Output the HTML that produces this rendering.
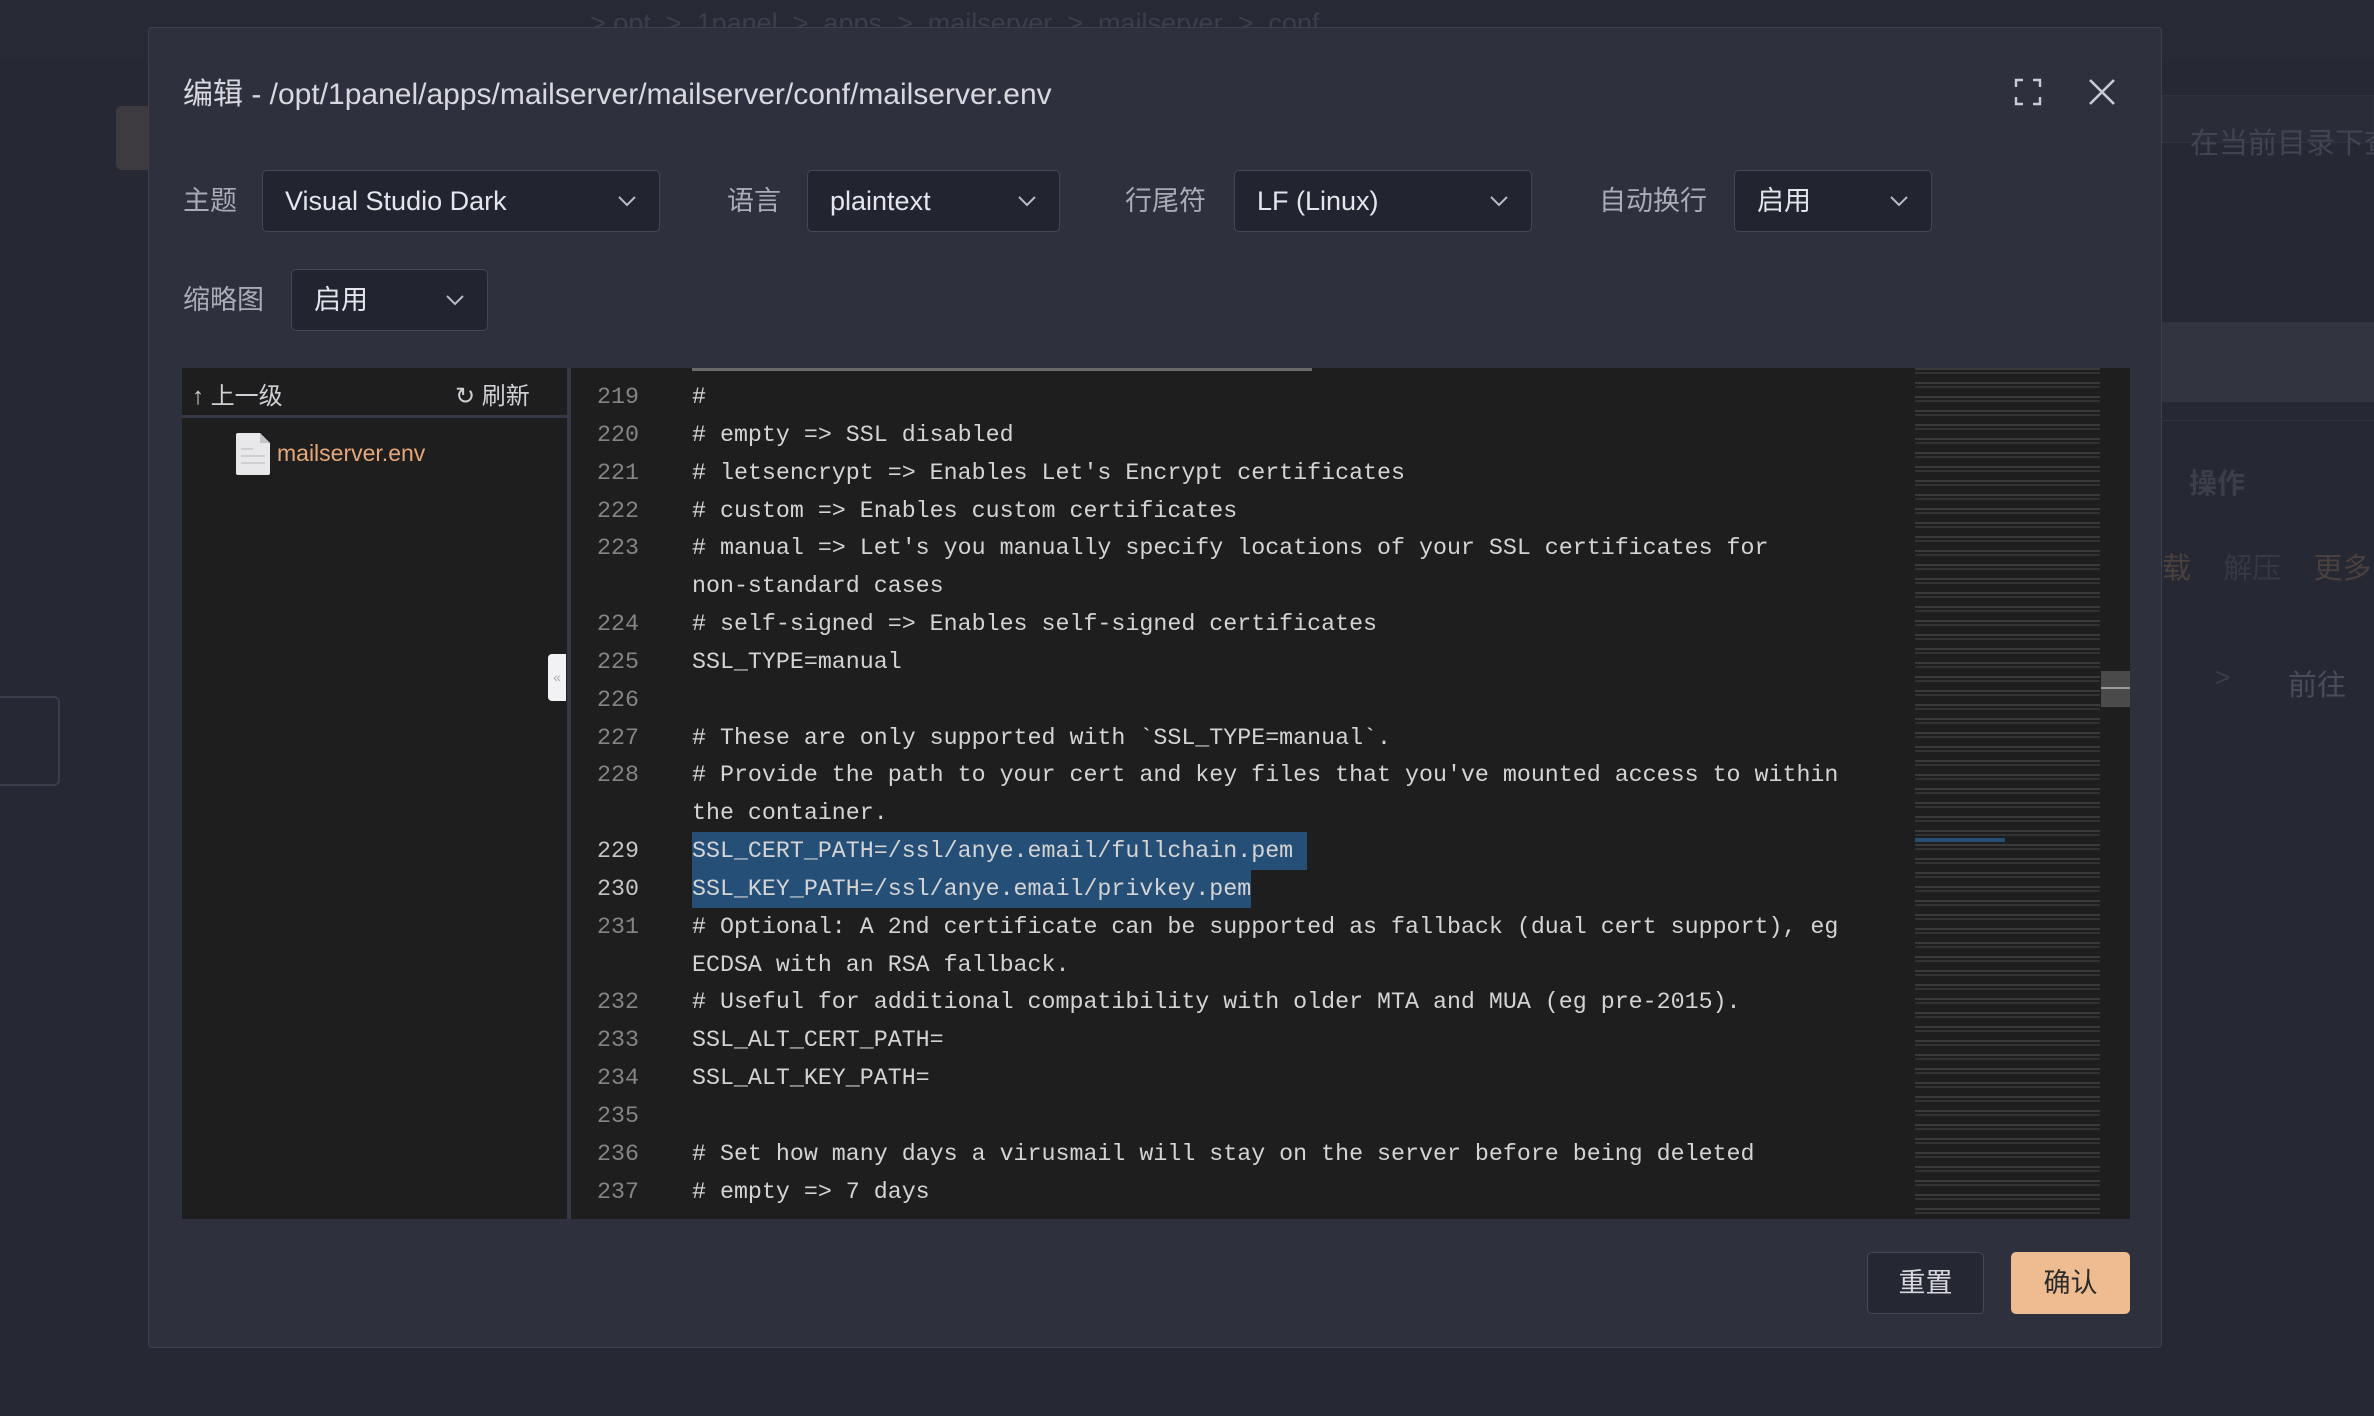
<!DOCTYPE html>
<html><head><meta charset="utf-8">
<style>
*{margin:0;padding:0;box-sizing:border-box}
body{width:2374px;height:1416px;background:#262833;position:relative;overflow:hidden;font-family:"Liberation Sans","Noto Sans CJK SC",sans-serif}
.abs{position:absolute;white-space:nowrap}
.dlg{left:148px;top:27px;width:2014px;height:1321px;background:#2e303d;border:1px solid #3d404d;border-radius:4px}
.lbl{position:absolute;color:#a9acb5;font-size:27px;line-height:30px}
.sel{position:absolute;background:#22242f;border:1px solid #444754;border-radius:5px;height:62px;color:#e4e6ec;font-size:27px;line-height:60px;padding-left:22px}
.sel svg{position:absolute;right:22px;top:23px}
.code{position:absolute;left:571px;top:368px;width:1559px;height:851px;background:#1e1e1e;overflow:hidden}
.row{position:absolute;left:0;height:38px;font-family:"Liberation Mono",monospace;font-size:23.3px;line-height:38px;white-space:pre;color:#d4d4d4}
.ln{position:absolute;width:68px;text-align:right;left:0;color:#858585}
.tx{position:absolute;left:121px}
.hl{background:#264f78}
</style></head><body>
<div class="abs" style="left:0;top:0;width:2374px;height:60px;background:#272934"></div>
<div class="abs" style="left:590px;top:8px;color:#3c3f4b;font-size:27px">&gt; opt &nbsp;&gt; &nbsp;1panel &nbsp;&gt; &nbsp;apps &nbsp;&gt; &nbsp;mailserver &nbsp;&gt; &nbsp;mailserver &nbsp;&gt; &nbsp;conf</div>
<div class="abs" style="left:116px;top:106px;width:40px;height:64px;background:#3d3b40;border-radius:6px"></div>
<div class="abs" style="left:0;top:696px;width:60px;height:90px;border:2px solid #3b3e4a;border-left:none;border-radius:0 6px 6px 0"></div>
<div class="abs" style="left:2162px;top:95px;width:212px;height:48px;border:1px solid #30323e;background:#2a2c37"></div>
<div class="abs" style="left:2190px;top:120px;color:#414452;font-size:29px">在当前目录下查</div>
<div class="abs" style="left:2162px;top:322px;width:212px;height:80px;background:#32343f"></div>
<div class="abs" style="left:2162px;top:420px;width:212px;height:1px;background:#30323d"></div>
<div class="abs" style="left:2189px;top:462px;color:#3c3e4a;font-size:28px;font-weight:bold">操作</div>
<div class="abs" style="left:2162px;top:545px;color:#4a413f;font-size:29px">载 &nbsp;&nbsp;&nbsp;<span style="color:#363842">解压</span>&nbsp;&nbsp;&nbsp; 更多</div>
<div class="abs" style="left:2215px;top:662px;color:#3c3f4b;font-size:26px">&gt;</div>
<div class="abs" style="left:2288px;top:662px;color:#4a4d59;font-size:29px">前往</div>

<div class="abs dlg"></div>
<div class="abs" style="left:183px;top:77px;color:#d7d9de;font-size:30px;line-height:36px">编辑 - /opt/1panel/apps/mailserver/mailserver/conf/mailserver.env</div>
<svg class="abs" style="left:2014px;top:78px" width="28" height="28" viewBox="0 0 28 28" fill="none" stroke="#c9ccd3" stroke-width="2.4"><path d="M2 9V2h7M19 2h7v7M26 19v7h-7M9 26H2v-7"/></svg>
<svg class="abs" style="left:2088px;top:78px" width="28" height="28" viewBox="0 0 28 28" fill="none" stroke="#c9ccd3" stroke-width="2.6"><path d="M2 2L26 26M26 2L2 26"/></svg>

<div class="lbl" style="left:183px;top:186px">主题</div>
<div class="sel" style="left:262px;top:170px;width:398px">Visual Studio Dark<svg width="20" height="14" viewBox="0 0 20 14" fill="none" stroke="#b8bbc3" stroke-width="2"><path d="M2 3l8 8 8-8"/></svg></div>
<div class="lbl" style="left:727px;top:186px">语言</div>
<div class="sel" style="left:807px;top:170px;width:253px">plaintext<svg width="20" height="14" viewBox="0 0 20 14" fill="none" stroke="#b8bbc3" stroke-width="2"><path d="M2 3l8 8 8-8"/></svg></div>
<div class="lbl" style="left:1125px;top:186px">行尾符</div>
<div class="sel" style="left:1234px;top:170px;width:298px">LF (Linux)<svg width="20" height="14" viewBox="0 0 20 14" fill="none" stroke="#b8bbc3" stroke-width="2"><path d="M2 3l8 8 8-8"/></svg></div>
<div class="lbl" style="left:1599px;top:186px">自动换行</div>
<div class="sel" style="left:1734px;top:170px;width:198px">启用<svg width="20" height="14" viewBox="0 0 20 14" fill="none" stroke="#b8bbc3" stroke-width="2"><path d="M2 3l8 8 8-8"/></svg></div>
<div class="lbl" style="left:183px;top:285px">缩略图</div>
<div class="sel" style="left:291px;top:269px;width:197px">启用<svg width="20" height="14" viewBox="0 0 20 14" fill="none" stroke="#b8bbc3" stroke-width="2"><path d="M2 3l8 8 8-8"/></svg></div>

<div class="abs" style="left:182px;top:368px;width:386px;height:851px;background:#1e1e1e"></div>
<div class="abs" style="left:182px;top:415px;width:386px;height:3px;background:#353846"></div>
<div class="abs" style="left:567px;top:368px;width:4px;height:851px;background:#353846"></div>
<div class="abs" style="left:192px;top:376px;color:#cfd1d6;font-size:24px">↑ 上一级</div>
<div class="abs" style="left:455px;top:376px;color:#cfd1d6;font-size:24px">↻ 刷新</div>
<svg class="abs" style="left:236px;top:433px" width="34" height="42" viewBox="0 0 34 42"><path d="M2 0h22l10 10v30a2 2 0 0 1-2 2H2a2 2 0 0 1-2-2V2a2 2 0 0 1 2-2z" fill="#e8e8ea"/><path d="M24 0v10h10" fill="#c4c4c8"/><path d="M5 16h12M5 23h24M5 30h24" stroke="#cfcfd3" stroke-width="2"/></svg>
<div class="abs" style="left:277px;top:440px;color:#e6a878;font-size:23px">mailserver.env</div>
<div class="abs" style="left:548px;top:654px;width:18px;height:47px;background:#f2f2f4;border-radius:4px 0 0 4px;color:#aaa;font-size:14px;line-height:47px;text-align:center">«</div>

<div class="code">
<div class="abs" style="left:121px;top:0;width:620px;height:3px;background:#6a6a6a"></div>
<div class="row" style="top:10px"><span class="ln">219</span><span class="tx">#</span></div>
<div class="row" style="top:48px"><span class="ln">220</span><span class="tx"># empty =&gt; SSL disabled</span></div>
<div class="row" style="top:86px"><span class="ln">221</span><span class="tx"># letsencrypt =&gt; Enables Let's Encrypt certificates</span></div>
<div class="row" style="top:124px"><span class="ln">222</span><span class="tx"># custom =&gt; Enables custom certificates</span></div>
<div class="row" style="top:161px"><span class="ln">223</span><span class="tx"># manual =&gt; Let's you manually specify locations of your SSL certificates for</span></div>
<div class="row" style="top:199px"><span class="tx">non-standard cases</span></div>
<div class="row" style="top:237px"><span class="ln">224</span><span class="tx"># self-signed =&gt; Enables self-signed certificates</span></div>
<div class="row" style="top:275px"><span class="ln">225</span><span class="tx">SSL_TYPE=manual</span></div>
<div class="row" style="top:313px"><span class="ln">226</span></div>
<div class="row" style="top:351px"><span class="ln">227</span><span class="tx"># These are only supported with `SSL_TYPE=manual`.</span></div>
<div class="row" style="top:388px"><span class="ln">228</span><span class="tx"># Provide the path to your cert and key files that you've mounted access to within</span></div>
<div class="row" style="top:426px"><span class="tx">the container.</span></div>
<div class="row" style="top:464px"><span class="ln" style="color:#c6c6c6">229</span><span class="tx hl">SSL_CERT_PATH=/ssl/anye.email/fullchain.pem </span></div>
<div class="row" style="top:502px"><span class="ln" style="color:#c6c6c6">230</span><span class="tx hl">SSL_KEY_PATH=/ssl/anye.email/privkey.pem</span></div>
<div class="row" style="top:540px"><span class="ln">231</span><span class="tx"># Optional: A 2nd certificate can be supported as fallback (dual cert support), eg</span></div>
<div class="row" style="top:578px"><span class="tx">ECDSA with an RSA fallback.</span></div>
<div class="row" style="top:615px"><span class="ln">232</span><span class="tx"># Useful for additional compatibility with older MTA and MUA (eg pre-2015).</span></div>
<div class="row" style="top:653px"><span class="ln">233</span><span class="tx">SSL_ALT_CERT_PATH=</span></div>
<div class="row" style="top:691px"><span class="ln">234</span><span class="tx">SSL_ALT_KEY_PATH=</span></div>
<div class="row" style="top:729px"><span class="ln">235</span></div>
<div class="row" style="top:767px"><span class="ln">236</span><span class="tx"># Set how many days a virusmail will stay on the server before being deleted</span></div>
<div class="row" style="top:805px"><span class="ln">237</span><span class="tx"># empty =&gt; 7 days</span></div>
<div class="abs" style="left:1344px;top:0;width:185px;height:851px;background:repeating-linear-gradient(180deg,rgba(140,140,140,.25) 0 2px,transparent 2px 4px,rgba(140,140,140,.18) 4px 6px,transparent 6px 14px),linear-gradient(90deg,transparent 0,transparent 55%,rgba(30,30,30,.6) 70%,#1e1e1e 100%)"></div>
<div class="abs" style="left:1344px;top:470px;width:90px;height:4px;background:#264f78"></div>
<div class="abs" style="left:1530px;top:303px;width:29px;height:36px;background:#4a4a4a"></div>
<div class="abs" style="left:1530px;top:319px;width:29px;height:2px;background:#9a9a9a"></div>
</div>

<div class="abs" style="left:1867px;top:1252px;width:117px;height:62px;border:1px solid #464956;border-radius:5px;background:#252733;color:#d7d9de;font-size:27px;line-height:60px;text-align:center">重置</div>
<div class="abs" style="left:2011px;top:1252px;width:119px;height:62px;border-radius:5px;background:#efbc92;color:#2a2a2a;font-size:27px;line-height:62px;text-align:center">确认</div>
</body></html>
